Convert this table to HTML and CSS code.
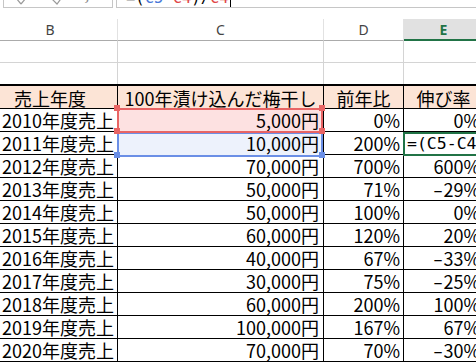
FILE: index.html
```html
<!DOCTYPE html>
<html lang="ja">
<head>
    <meta charset="utf-8">
    <title>梅干し売上</title>
    <link rel="stylesheet" href="styles.css">
</head>
<body>
    <div class="formula-bar">
        <div class="fx-box">
            <svg class="fx-icons" width="108" height="7" viewBox="0 0 108 7">
                <path d="M7 -8 L17 4 M27 -8 L17 4" stroke="#9a9a9a" stroke-width="1.2" fill="none"/>
                <path d="M47 -2 L53 4 L62 -8" stroke="#9a9a9a" stroke-width="1.2" fill="none"/>
            </svg>
            <span class="fx-label">fx</span>
        </div>
        <div class="formula-input">
            <div class="formula-text">=(<span class="ref-blue">C5</span>-<span class="ref-red">C4</span>)/<span class="ref-red">C4</span><span class="caret"></span></div>
        </div>
    </div>

    <div class="sheet">
        <div class="row col-head">
            <div class="cell">B</div>
            <div class="cell">C</div>
            <div class="cell">D</div>
            <div class="cell active-col">E</div>
        </div>
        <div class="row blank">
            <div class="cell"></div><div class="cell"></div><div class="cell"></div><div class="cell"></div>
        </div>
        <div class="row blank no-line">
            <div class="cell"></div><div class="cell"></div><div class="cell"></div><div class="cell"></div>
        </div>
        <div class="row table-head">
            <div class="cell">売上年度</div>
            <div class="cell">100年漬け込んだ梅干し</div>
            <div class="cell">前年比</div>
            <div class="cell">伸び率</div>
        </div>
        <div class="row data">
            <div class="cell c-b">2010年度売上</div>
            <div class="cell c-c sel-red">5,000円</div>
            <div class="cell c-d">0%</div>
            <div class="cell c-e">0%</div>
        </div>
        <div class="row data">
            <div class="cell c-b">2011年度売上</div>
            <div class="cell c-c sel-blue">10,000円</div>
            <div class="cell c-d">200%</div>
            <div class="cell c-e editing">=(C5-C4</div>
        </div>
        <div class="row data">
            <div class="cell c-b">2012年度売上</div>
            <div class="cell c-c">70,000円</div>
            <div class="cell c-d">700%</div>
            <div class="cell c-e">600%</div>
        </div>
        <div class="row data">
            <div class="cell c-b">2013年度売上</div>
            <div class="cell c-c">50,000円</div>
            <div class="cell c-d">71%</div>
            <div class="cell c-e"><span class="minus">-</span>29%</div>
        </div>
        <div class="row data">
            <div class="cell c-b">2014年度売上</div>
            <div class="cell c-c">50,000円</div>
            <div class="cell c-d">100%</div>
            <div class="cell c-e">0%</div>
        </div>
        <div class="row data">
            <div class="cell c-b">2015年度売上</div>
            <div class="cell c-c">60,000円</div>
            <div class="cell c-d">120%</div>
            <div class="cell c-e">20%</div>
        </div>
        <div class="row data">
            <div class="cell c-b">2016年度売上</div>
            <div class="cell c-c">40,000円</div>
            <div class="cell c-d">67%</div>
            <div class="cell c-e"><span class="minus">-</span>33%</div>
        </div>
        <div class="row data">
            <div class="cell c-b">2017年度売上</div>
            <div class="cell c-c">30,000円</div>
            <div class="cell c-d">75%</div>
            <div class="cell c-e"><span class="minus">-</span>25%</div>
        </div>
        <div class="row data">
            <div class="cell c-b">2018年度売上</div>
            <div class="cell c-c">60,000円</div>
            <div class="cell c-d">200%</div>
            <div class="cell c-e">100%</div>
        </div>
        <div class="row data">
            <div class="cell c-b">2019年度売上</div>
            <div class="cell c-c">100,000円</div>
            <div class="cell c-d">167%</div>
            <div class="cell c-e">67%</div>
        </div>
        <div class="row data">
            <div class="cell c-b">2020年度売上</div>
            <div class="cell c-c">70,000円</div>
            <div class="cell c-d">70%</div>
            <div class="cell c-e"><span class="minus">-</span>30%</div>
        </div>
    </div>
</body>
</html>
```

FILE: styles.css
```css
* {
    box-sizing: border-box;
}
html, body {
    margin: 0;
}
body {
    width: 476px;
    height: 362px;
    overflow: hidden;
    background: #fff;
    color: #000;
    font-family: "Noto Sans CJK JP", sans-serif;
}

/* formula bar, scrolled so only its lower edge shows */
.formula-bar {
    display: flex;
    height: 8px;
    overflow: hidden;
}
.fx-box {
    position: relative;
    width: 110px;
    height: 8px;
    margin-left: 3px;
    border: 1px solid #c6c6c6;
    border-top: none;
    flex-shrink: 0;
}
.fx-icons {
    display: block;
}
.fx-label {
    position: absolute;
    left: 82px;
    top: -14px;
    font: italic 15px "DejaVu Serif", serif;
    color: #8a8a8a;
}
.formula-input {
    width: 400px;
    height: 8px;
    margin-left: 3px;
    padding-left: 9px;
    border: 1px solid #c6c6c6;
    border-top: none;
    flex-shrink: 0;
}
.formula-text {
    margin-top: -12px;
    font: 15.5px/20px "DejaVu Sans Mono", monospace;
    white-space: pre;
}
.ref-blue {
    color: #4a78d8;
}
.ref-red {
    color: #e04848;
}
.caret {
    display: inline-block;
    width: 1px;
    height: 18px;
    margin-left: 1px;
    background: #000;
    vertical-align: -4px;
}

/* grid */
.row {
    display: grid;
    grid-template-columns: 135px 206px 80px 80px;
    margin-left: -17px;
}
.cell {
    border-right: 1px solid #d4d4d4;
    white-space: nowrap;
    overflow: hidden;
}

.col-head {
    margin-top: 11px;
    height: 22px;
}
.col-head .cell {
    border-right-color: #e2e2e2;
    border-bottom: 1px solid #ababab;
    font: 14px/21px "Noto Sans", sans-serif;
    color: #444;
    text-align: center;
}
.col-head .active-col {
    background: #e1e1e1;
    border-bottom: 2px solid #217346;
    color: #217346;
    font-weight: bold;
}

.blank {
    height: 22px;
    border-bottom: 1px solid #d4d4d4;
}
.blank.no-line {
    height: 21px;
    border-bottom: none;
}

.table-head {
    height: 25px;
    border-top: 2px solid #000;
    border-bottom: 1px solid #000;
}
.table-head .cell {
    background: #fce4d6;
    border-right-color: #000;
    font-size: 18px;
    line-height: 24px;
    text-align: center;
}

.data {
    height: 23px;
    border-bottom: 1px solid #000;
}
.data .cell {
    border-right-color: #000;
    font-size: 18px;
    line-height: 23px;
    text-align: right;
    padding-right: 3px;
}
.data .c-c {
    padding-right: 4px;
}
.minus {
    display: inline-block;
    width: 10px;
    text-align: left;
    transform: scaleX(1.6);
    transform-origin: left center;
}
.data .editing {
    text-align: left;
    padding-left: 3px;
    font: 16.5px/23px "DejaVu Sans Mono", monospace;
    position: relative;
    overflow: visible;
}
.editing::after {
    content: "";
    position: absolute;
    left: -1px;
    top: 0;
    right: -1px;
    bottom: -1px;
    border: 2px solid #217346;
}

/* range highlights for the references in the formula */
.sel-red,
.sel-blue {
    position: relative;
    overflow: visible;
}
.sel-red {
    background: #fde1e1;
}
.sel-blue {
    background: #edf2fc;
}
.sel-red::after,
.sel-blue::after {
    content: "";
    position: absolute;
    left: -1px;
    right: 0;
    border: 2px solid;
}
.sel-red::after {
    top: -1px;
    bottom: -1px;
    border-color: #e86565;
    z-index: 2;
}
.sel-blue::after {
    top: 0;
    bottom: -2px;
    border-color: #6b8fe6;
    z-index: 1;
}
.sel-red::before,
.sel-blue::before {
    content: "";
    position: absolute;
    width: 6px;
    height: 6px;
    left: -4px;
}
.sel-red::before {
    top: -4px;
    background: #e86565;
    box-shadow: 205px 0 #e86565, 0 23px #e86565, 205px 23px #e86565;
    z-index: 3;
}
.sel-blue::before {
    top: 20px;
    background: #6b8fe6;
    box-shadow: 205px 0 #6b8fe6;
    z-index: 1;
}
```
